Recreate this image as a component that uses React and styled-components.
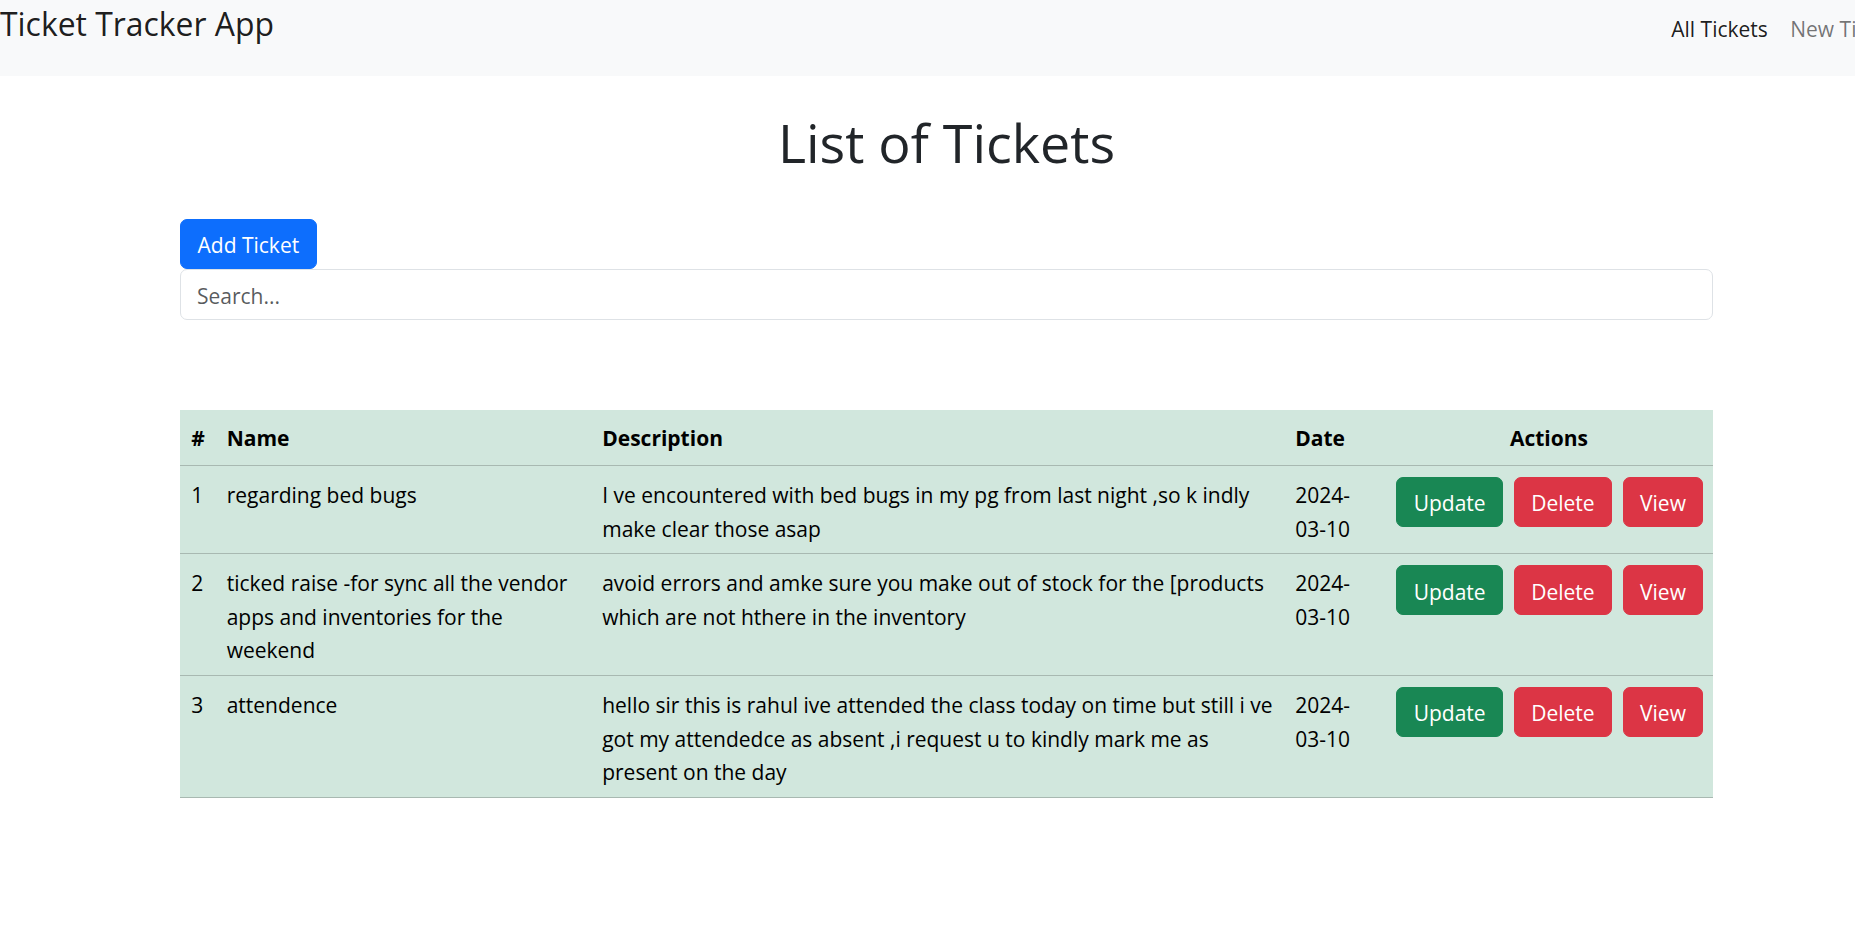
import React from 'react';
import styled, { createGlobalStyle } from 'styled-components';

const GlobalStyle = createGlobalStyle`
  html { overflow-x: hidden; }
  html, body { margin: 0; padding: 0; background: #fff; }
  body {
    font-family: "Open Sans", "Noto Sans", sans-serif;
    font-size: 21px;
    line-height: 33.6px;
    color: #212529;
  }
  *, *::before, *::after { box-sizing: border-box; }
`;

const Page = styled.div`
  width: 1893px;
`;

const Navbar = styled.nav`
  display: flex;
  align-items: flex-start;
  justify-content: space-between;
  height: 76px;
  background: #f8f9fa;
`;

const Brand = styled.a`
  font-size: 31.9px;
  line-height: 48px;
  color: rgba(0, 0, 0, 0.9);
  text-decoration: none;
`;

const NavList = styled.ul`
  display: flex;
  list-style: none;
  margin: 13.4px -15px 0 0;
  padding: 0;
`;

const NavLink = styled.a`
  display: block;
  padding: 0 11.2px;
  color: ${(p) => (p.$active ? 'rgba(0, 0, 0, 0.9)' : 'rgba(0, 0, 0, 0.55)')};
  text-decoration: none;
  white-space: nowrap;
`;

const Container = styled.main`
  width: 1533px;
  margin: 0 auto;
`;

const Title = styled.h1`
  margin: 33px 0 42.8px;
  font-size: 53.8px;
  line-height: 67.2px;
  font-weight: 400;
  text-align: center;
  color: #212529;
`;

const colors = {
  primary: '#0d6efd',
  success: '#198754',
  danger: '#dc3545',
};

const Button = styled.button`
  display: inline-block;
  font-family: inherit;
  font-size: 21px;
  line-height: 33.6px;
  font-weight: 400;
  padding: 9.4px 16.5px 5px;
  color: #fff;
  background: ${(p) => colors[p.$variant]};
  border: 1px solid ${(p) => colors[p.$variant]};
  border-radius: 7px;
  white-space: nowrap;
  cursor: pointer;
`;

const Toolbar = styled.div`
  display: flex;
  flex-direction: column;
  align-items: flex-start;
`;

const SearchInput = styled.input`
  display: block;
  width: 100%;
  font-family: inherit;
  font-size: 21px;
  line-height: 33.6px;
  padding: 9.9px 16px 5.5px 16px;
  border: 1px solid #dee2e6;
  border-radius: 7px;
  color: #212529;
  background: #fff;
  outline: none;
  &::placeholder {
    color: rgba(33, 37, 41, 0.75);
  }
`;

const Table = styled.table`
  width: 100%;
  margin-top: 90px;
  border-collapse: collapse;
  table-layout: fixed;
  color: #000;
`;

const Col = styled.col`
  width: ${(p) => p.$w}px;
`;

const Th = styled.th`
  background: #d1e7dd;
  border-bottom: 1px solid #a8b9b1;
  padding: 12.5px 11.2px 9px;
  font-weight: 700;
  text-align: ${(p) => p.$align || 'left'};
  vertical-align: top;
`;

const Td = styled.td`
  background: #d1e7dd;
  border-bottom: 1px solid #a8b9b1;
  padding: ${(p) => (p.$actions ? '11px' : '13px')}
    ${(p) => (p.$tight ? '4px' : '11.2px')} 7px 11.2px;
  vertical-align: top;
`;

const Actions = styled.div`
  display: flex;
  flex-wrap: nowrap;
  gap: 10.5px;
`;

const tickets = [
  {
    id: 1,
    name: 'regarding bed bugs',
    description:
      'I ve encountered with bed bugs in my pg from last night ,so k indly make clear those asap',
  },
  {
    id: 2,
    name: 'ticked raise -for sync all the vendor apps and inventories for the weekend',
    description:
      'avoid errors and amke sure you make out of stock for the [products which are not hthere in the inventory',
  },
  {
    id: 3,
    name: 'attendence',
    description:
      'hello sir this is rahul ive attended the class today on time but still i ve got my attendedce as absent ,i request u to kindly mark me as present on the day',
  },
];

export default function App() {
  return (
    <Page>
      <GlobalStyle />
      <Navbar>
        <Brand href="#">Ticket Tracker App</Brand>
        <NavList>
          <li>
            <NavLink href="#" $active>
              All Tickets
            </NavLink>
          </li>
          <li>
            <NavLink href="#">New Ticket</NavLink>
          </li>
        </NavList>
      </Navbar>
      <Container>
        <Title>List of Tickets</Title>
        <Toolbar>
          <Button $variant="primary">Add Ticket</Button>
          <SearchInput type="text" placeholder="Search..." />
        </Toolbar>
        <Table>
          <colgroup>
            <Col $w={35.5} />
            <Col $w={375.5} />
            <Col $w={693} />
            <Col $w={101} />
            <Col $w={328} />
          </colgroup>
          <thead>
            <tr>
              <Th>#</Th>
              <Th>Name</Th>
              <Th>Description</Th>
              <Th>Date</Th>
              <Th $align="center">Actions</Th>
            </tr>
          </thead>
          <tbody>
            {tickets.map((t) => (
              <tr key={t.id}>
                <Td>{t.id}</Td>
                <Td>{t.name}</Td>
                <Td $tight>{t.description}</Td>
                <Td>
                  2024-<wbr />03-10
                </Td>
                <Td $actions>
                  <Actions>
                    <Button $variant="success">Update</Button>
                    <Button $variant="danger">Delete</Button>
                    <Button $variant="danger">View</Button>
                  </Actions>
                </Td>
              </tr>
            ))}
          </tbody>
        </Table>
      </Container>
    </Page>
  );
}
